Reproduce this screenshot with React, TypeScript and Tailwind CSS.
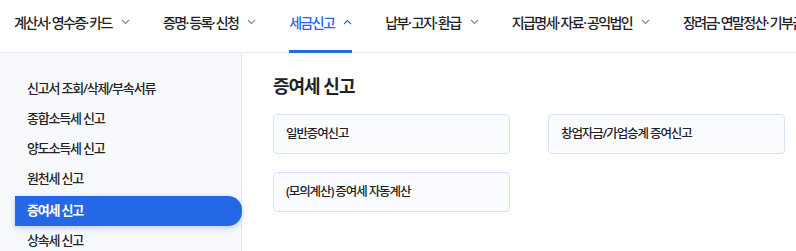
import React from 'react';

const font = { fontFamily: '"Noto Sans", "Noto Sans CJK KR", sans-serif' };

const navItems = [
  { label: '계산서·영수증·카드', active: false },
  { label: '증명·등록·신청', active: false },
  { label: '세금신고', active: true },
  { label: '납부·고지·환급', active: false },
  { label: '지급명세·자료·공익법인', active: false },
  { label: '장려금·연말정산·기부금', active: false },
];

const sideItems = [
  '신고서 조회/삭제/부속서류',
  '종합소득세 신고',
  '양도소득세 신고',
  '원천세 신고',
  '증여세 신고',
  '상속세 신고',
];

function Chevron({ up }: { up?: boolean }) {
  return (
    <svg width="9" height="6" viewBox="0 0 9 6" fill="none" className="shrink-0">
      <path
        d={up ? 'M1 5L4.5 1.5L8 5' : 'M1 1L4.5 4.5L8 1'}
        stroke={up ? '#2468e8' : '#888'}
        strokeWidth="1.1"
      />
    </svg>
  );
}

function NavLabel({ text }: { text: string }) {
  const parts = text.split('·');
  return (
    <span>
      {parts.map((p, i) => (
        <React.Fragment key={i}>
          {i > 0 && <span className="tracking-normal">·</span>}
          {p}
        </React.Fragment>
      ))}
    </span>
  );
}

export default function App() {
  return (
    <div className="w-[796px] h-[251px] overflow-hidden bg-white text-[#222]" style={font}>
      <header className="h-[53px] border-b border-[#e6e8ec] flex pl-[14px] gap-[33px] whitespace-nowrap">
        {navItems.map(item => (
          <div
            key={item.label}
            className={`relative flex shrink-0 items-center gap-[9px] pb-[8px] text-[14px] font-medium tracking-[-1.6px] ${
              item.active ? 'text-[#2468e8]' : 'text-[#222]'
            }`}
          >
            <NavLabel text={item.label} />
            <Chevron up={item.active} />
            {item.active && (
              <span className="absolute left-0 right-0 -bottom-px h-[3px] bg-[#2468e8]" />
            )}
          </div>
        ))}
      </header>

      <div className="flex h-[198px]">
        <aside className="w-[242px] shrink-0 bg-[#f8f9fd] border-r border-[#e3e7f0] pt-[21px] pl-[15px]">
          {sideItems.map(label => {
            const active = label === '증여세 신고';
            return (
              <div
                key={label}
                className={`h-[30px] flex items-center pl-[12px] text-[13px] tracking-[-1.2px] ${
                  active
                    ? 'mt-[2px] bg-[#2468e8] text-white font-bold rounded-r-[14px] shadow-[0_2px_6px_rgba(36,104,232,0.3)] -mr-px'
                    : 'font-medium text-[#222]'
                }`}
              >
                {label}
              </div>
            );
          })}
        </aside>

        <main className="pl-[31px] pt-[20px]">
          <h2 className="text-[18px] font-bold tracking-[-1px] leading-[26px]">증여세 신고</h2>
          <div className="mt-[15px] grid grid-cols-[237px_237px] gap-x-[38px] gap-y-[18px]">
            {['일반증여신고', '창업자금/가업승계 증여신고', '(모의계산) 증여세 자동계산'].map(t => (
              <div
                key={t}
                className="h-[40px] flex items-center px-[12px] border border-[#d6e2fa] bg-[#fbfcff] rounded-[4px] text-[12.5px] font-medium tracking-[-1.1px]"
              >
                {t}
              </div>
            ))}
          </div>
        </main>
      </div>
    </div>
  );
}
